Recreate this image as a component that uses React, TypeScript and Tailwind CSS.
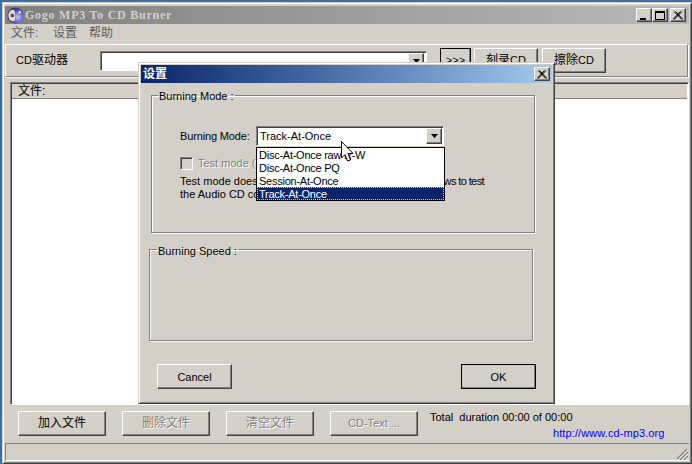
import type { ReactNode } from "react";

const raised =
  "border-t border-l border-t-white border-l-white border-r border-b border-r-[#404040] border-b-[#404040] shadow-[inset_-1px_-1px_0_#808080] bg-[#d4d0c8]";

const sunken =
  "border-t border-l border-t-[#808080] border-l-[#808080] border-r border-b border-r-white border-b-white shadow-[inset_1px_1px_0_#404040]";

function Btn({ children, disabled, className }: { children: ReactNode; disabled?: boolean; className: string }) {
  return (
    <div
      className={`${raised} ${className} flex items-center justify-center shrink-0 text-[12px] ${
        disabled ? "text-[#808080] [text-shadow:1px_1px_0_#fff]" : "text-black"
      }`}
    >
      {children}
    </div>
  );
}

function Arrow() {
  return (
    <div className={`${raised} w-[16px] h-[16px] shrink-0 flex items-center justify-center`}>
      <svg width="7" height="4" viewBox="0 0 7 4">
        <path d="M0 0h7L3.5 4z" fill="#000" />
      </svg>
    </div>
  );
}

function CapButton({ children }: { children: ReactNode }) {
  return <div className={`${raised} w-[16px] h-[14px] flex items-center justify-center shrink-0`}>{children}</div>;
}

function CloseGlyph() {
  return (
    <svg width="10" height="9" viewBox="0 0 10 9">
      <path d="M1 0.5L9 8.5M2.5 0.5L10 8.5M9 0.5L1 8.5M7.5 0.5L0 8.5" stroke="#000" strokeWidth="1" fill="none" />
    </svg>
  );
}

function AppIcon() {
  return (
    <svg width="17" height="17" viewBox="0 0 16 16" className="shrink-0">
      <defs>
        <radialGradient id="disc" cx="0.65" cy="0.6" r="0.7">
          <stop offset="0" stopColor="#c0c8f4" />
          <stop offset="0.5" stopColor="#5a60c0" />
          <stop offset="1" stopColor="#20205a" />
        </radialGradient>
      </defs>
      <circle cx="8" cy="8" r="7.5" fill="url(#disc)" />
      <path d="M1.5 6C3 2.5 6 2 7 3.5C8 6 7 9 7.5 12C6 14.5 3 13 2 11C1.5 9 1 8 1.5 6Z" fill="#ecdcdc" />
      <circle cx="5" cy="8" r="1.8" fill="#804858" />
      <circle cx="12" cy="5" r="1.2" fill="#f0f0ff" />
    </svg>
  );
}

export default function App() {
  return (
    <div className="relative w-[692px] h-[464px] overflow-hidden bg-[#3a6ea5] pt-[2px] pl-[2px] font-['Liberation_Sans','Noto_Sans_CJK_SC',sans-serif] text-[12px] leading-[13px] text-black">
      {/* Main window */}
      <div className="w-[690px] h-[462px] bg-[#d4d0c8] border border-t-[#d4d0c8] border-l-[#d4d0c8] border-r-[#404040] border-b-[#404040] shadow-[inset_1px_1px_0_#fff,inset_-1px_-1px_0_#808080] pt-[3px] px-[2px]">
        {/* Title bar */}
        <div className="h-[18px] flex items-center pl-[2px] pr-[3px] bg-gradient-to-r from-[#808080] to-[#b9b9b9]">
          <AppIcon />
          <span className="ml-[1px] font-['Liberation_Serif',serif] font-bold text-[12px] tracking-[0.75px] text-[#d4d0c8]">
            Gogo MP3 To CD Burner
          </span>
          <div className="ml-auto flex">
            <CapButton>
              <div className="w-[6px] h-[2px] bg-black mt-[7px] -ml-[2px]" />
            </CapButton>
            <CapButton>
              <div className="w-[10px] h-[9px] border border-black border-t-2" />
            </CapButton>
            <div className="ml-[2px]">
              <CapButton>
                <CloseGlyph />
              </CapButton>
            </div>
          </div>
        </div>

        {/* Menu */}
        <div className="h-[19px] flex items-center pl-[6px] text-[#5c5c5c]">
          <span className="w-[42px]">文件:</span>
          <span className="w-[36px]">设置</span>
          <span>帮助</span>
        </div>

        {/* Toolbar */}
        <div className="mt-[1px] h-[33px] w-[683px] border border-t-white border-l-white border-r-[#808080] border-b-[#808080] shadow-[1px_1px_0_#fff] flex items-center pl-[10px]">
          <span className="w-[84px] shrink-0">
            <span className="text-[11px]">CD</span>驱动器
          </span>
          <div className={`${sunken} w-[327px] h-[20px] shrink-0 bg-white flex items-center justify-end pr-[2px]`}>
            <Arrow />
          </div>
          <Btn className="ml-[13px] w-[31px] h-[25px] outline outline-1 -outline-offset-1 outline-black">
            <span className="text-[11px]">{">>>"}</span>
          </Btn>
          <Btn className="ml-[3px] w-[64px] h-[25px]">
            刻录<span className="text-[11px]">CD</span>
          </Btn>
          <Btn className="ml-[4px] w-[64px] h-[25px]">
            擦除<span className="text-[11px]">CD</span>
          </Btn>
        </div>

        {/* File list */}
        <div className={`${sunken} mt-[5px] ml-[5px] w-[679px] h-[323px] bg-white p-[1px]`}>
          <div className="h-[15px] bg-[#d4d0c8] border-b border-b-[#808080] pl-[6px] flex items-center">文件:</div>
        </div>

        {/* Bottom buttons */}
        <div className="mt-[6px] h-[25px] pl-[13px] flex">
          <Btn className="w-[88px] h-[25px]">加入文件</Btn>
          <Btn disabled className="ml-[16px] w-[88px] h-[25px]">
            删除文件
          </Btn>
          <Btn disabled className="ml-[16px] w-[88px] h-[25px]">
            清空文件
          </Btn>
          <Btn disabled className="ml-[16px] w-[88px] h-[25px]">
            <span className="text-[11px]">CD-Text ...</span>
          </Btn>
          <div className="ml-[12px] flex flex-col text-[11px] whitespace-pre">
            <span>Total  duration 00:00 of 00:00</span>
            <span className="ml-[123px] mt-[3px] tracking-[0.1px] text-[#0000ff]">http://www.cd-mp3.org</span>
          </div>
        </div>

        {/* Status bar */}
        <div className="mt-[7px] h-[18px] w-[684px] border-t border-l border-t-[#808080] border-l-[#808080] border-b border-r border-b-white border-r-[#d4d0c8] flex justify-end items-end">
          <svg width="12" height="12" viewBox="0 0 12 12">
            <path d="M11 1L1 11M12 4L4 12M12 8L8 12" stroke="#808080" strokeWidth="1.2" fill="none" />
            <path d="M12 2L2 12M12 6L6 12M12 10L10 12" stroke="#fff" strokeWidth="0.8" fill="none" />
          </svg>
        </div>
      </div>

      {/* Settings dialog */}
      <div className="absolute left-[138px] top-[62px] w-[417px] h-[342px] bg-[#d4d0c8] border border-t-[#d4d0c8] border-l-[#d4d0c8] border-r-[#404040] border-b-[#404040] shadow-[inset_1px_1px_0_#fff,inset_-1px_-1px_0_#808080] p-[2px]">
        <div className="h-[18px] flex items-center justify-between pl-[2px] pr-[2px] bg-gradient-to-r from-[#0a246a] to-[#a6caf0]">
          <span className="font-bold text-white">设置</span>
          <CapButton>
            <CloseGlyph />
          </CapButton>
        </div>

        <fieldset className="mt-[5px] ml-[10px] w-[384px] h-[145px] border border-[#808080] shadow-[inset_1px_1px_0_#fff,1px_1px_0_#fff] text-[11px]">
          <legend className="ml-[6px] px-[1px] h-[15px] leading-[17px]">Burning Mode :</legend>
          <div className="mt-[23px] ml-[28px] flex items-center h-[20px]">
            <span className="w-[76px] shrink-0 tracking-[-0.15px]">Burning Mode:</span>
            <div className={`${sunken} w-[188px] h-[20px] bg-white flex items-center justify-between pl-[3px] pr-[1px]`}>
              <span className="leading-[15px]">Track-At-Once</span>
              <Arrow />
            </div>
          </div>
          <div className="mt-[11px] ml-[28px] h-[13px] flex items-center">
            <div className={`${sunken} w-[13px] h-[13px] bg-[#d4d0c8] shrink-0`} />
            <span className="ml-[5px] text-[#808080] [text-shadow:1px_1px_0_#fff]">Test mode (s</span>
          </div>
          <div className="mt-[5px] ml-[28px] w-[304px] flex justify-between leading-[13px]">
            <span>Test mode does</span>
            <span className="tracking-[-0.6px]">ws to test</span>
          </div>
          <div className="ml-[28px] leading-[13px]">the Audio CD co</div>
        </fieldset>

        <fieldset className="mt-[9px] ml-[8px] w-[384px] h-[99px] border border-[#808080] shadow-[inset_1px_1px_0_#fff,1px_1px_0_#fff] text-[11px]">
          <legend className="ml-[7px] px-[1px] h-[15px] leading-[19px]">Burning Speed :</legend>
        </fieldset>

        <div className="mt-[23px] ml-[16px] w-[379px] flex justify-between">
          <Btn className="w-[75px] h-[25px] pt-[1px]">
            <span className="text-[11px]">Cancel</span>
          </Btn>
          <Btn className="w-[75px] h-[25px] pt-[1px] outline outline-1 -outline-offset-1 outline-black">
            <span className="text-[11px]">OK</span>
          </Btn>
        </div>
      </div>

      {/* Open dropdown of the Burning Mode combo */}
      <div className="absolute left-[256px] top-[147px] w-[189px] h-[54px] border border-black bg-white text-[11px] tracking-[-0.25px] leading-[15px]">
        <div className="h-[13px] pl-[2px]">Disc-At-Once raw R-W</div>
        <div className="h-[13px] pl-[2px]">Disc-At-Once PQ</div>
        <div className="h-[13px] pl-[2px]">Session-At-Once</div>
        <div className="h-[13px] pl-[2px] bg-[#0a246a] text-white outline-dotted outline-1 -outline-offset-1 outline-[#d4d0c8]">
          Track-At-Once
        </div>
      </div>

      {/* Mouse pointer */}
      <svg className="absolute left-[341px] top-[141px]" width="13" height="22" viewBox="0 0 13 22">
        <path d="M0.5 0.5V17L4 13.5L6.5 20L9.5 19L7 12.5H12Z" fill="#fff" stroke="#000" strokeWidth="1" />
      </svg>
    </div>
  );
}
